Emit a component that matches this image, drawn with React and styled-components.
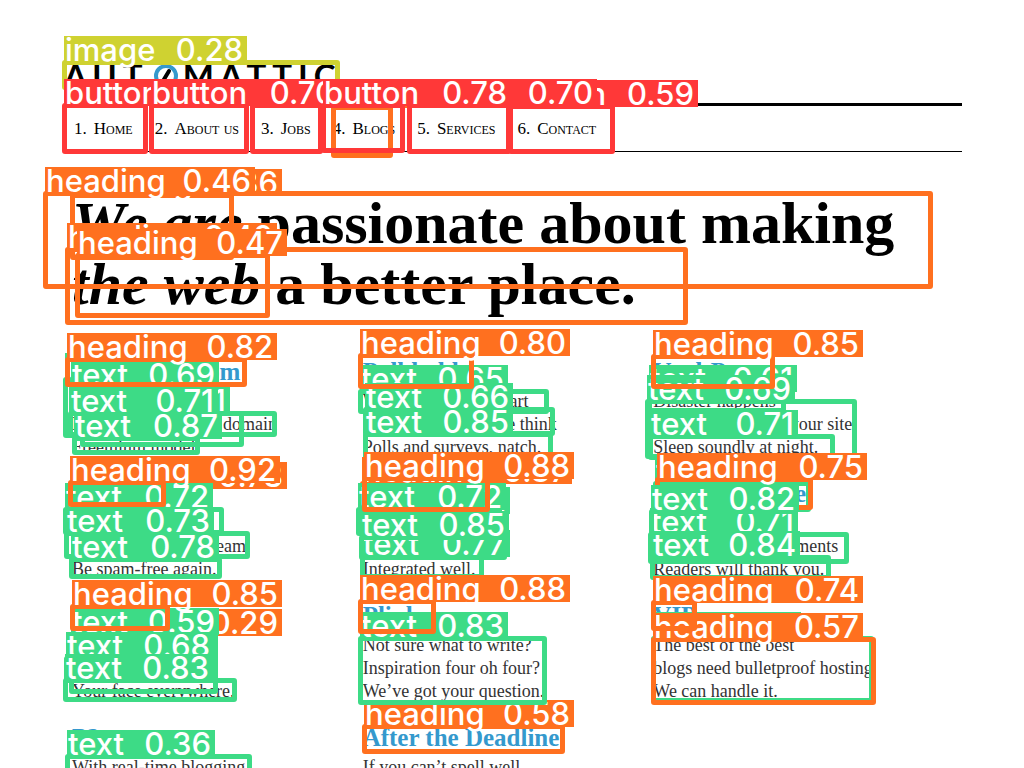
import React from 'react';
import styled, { createGlobalStyle } from 'styled-components';

const serif = '"Liberation Serif", "Times New Roman", serif';

const KINDS = {
  heading: { color: '#ff701f', width: 210 },
  text: { color: '#3ddb86', width: 148 },
  button: { color: '#ff3838', width: 188 },
  image: { color: '#cfd231', width: 183 },
};

const GlobalStyle = createGlobalStyle`
  * { box-sizing: border-box; }
  body { margin: 0; background: #fff; color: #333; font-family: ${serif}; }
`;

const Page = styled.div`
  position: relative;
  height: 100vh;
  overflow: hidden;
  padding: 60px 62px 0 64px;
`;

const Logo = styled.a`
  display: flex;
  align-items: center;
  gap: 5px;
  height: 43px;
  padding-bottom: 12px;
  color: #000;
  text-decoration: none;
  font: 700 33px/33px Lato, sans-serif;
  letter-spacing: 6px;
`;

const Nav = styled.nav`
  border-top: 3px solid #000;
  border-bottom: 1px solid #000;
`;

const NavList = styled.ol`
  display: flex;
  gap: 22px;
  margin: 0;
  padding: 0 10px;
  list-style: none;
`;

const NavLink = styled.a`
  display: flex;
  gap: 7px;
  color: #000;
  text-decoration: none;
  font-size: 17px;
  line-height: 45px;
  font-variant: small-caps;
  white-space: nowrap;
`;

const Tagline = styled.h1`
  margin: 41px 0 0;
  padding-left: 8px;
  color: #000;
  font-size: 60px;
  line-height: 61px;
  font-weight: 700;
`;

const Products = styled.div`
  display: grid;
  grid-template-columns: repeat(3, 1fr);
  row-gap: 22px;
  padding: 44px 18px 0 8px;
`;

const Product = styled.section`
  white-space: nowrap;
`;

const ProductName = styled.h2`
  margin: 0 0 5px;
  font-size: 25px;
  line-height: 26px;
  font-weight: 700;
`;

const ProductLink = styled.a`
  color: #3499cd;
  text-decoration: none;
`;

const Blurb = styled.p`
  margin: 0;
  font-size: 18px;
  line-height: 23px;
`;

const Overlay = styled.div`
  position: absolute;
  inset: 0;
  overflow: hidden;
  pointer-events: none;
`;

const Frame = styled.div.attrs(({ $x1, $y1, $x2, $y2 }) => ({
  style: { left: $x1 - 2, top: $y1 - 2, width: $x2 - $x1 + 4, height: $y2 - $y1 + 4 },
}))`
  position: absolute;
  border: 5px solid ${({ $kind }) => KINDS[$kind].color};
  border-radius: 3px;
`;

const Tag = styled.div.attrs(({ $x, $y }) => ({ style: { left: $x, top: $y - 26 } }))`
  position: absolute;
  display: flex;
  justify-content: space-between;
  width: ${({ $kind }) => KINDS[$kind].width}px;
  height: 27px;
  padding: 0 4px 0 1px;
  background: ${({ $kind }) => KINDS[$kind].color};
  color: #fff;
  font: 500 31px/28px Inter, sans-serif;
  white-space: nowrap;
`;

const NAV = ['Home', 'About us', 'Jobs', 'Blogs', 'Services', 'Contact'];

const PRODUCTS = [
  ['WordPress.com', 'Your blog, for free', 'Even with your own domain', 'Freemium model.'],
  ['Polldaddy', 'When you need a chart', 'Find out what people think', 'Polls and surveys, natch.'],
  ['VaultPress', 'Disaster happens', 'Secure backups of your site', 'Sleep soundly at night.'],
  ['Akismet', 'Spam is not fun', 'Let us filter your stream', 'Be spam-free again.'],
  ['VideoPress', 'Beautiful video', 'Hosted for you', 'Integrated well.'],
  ['IntenseDebate', 'Threads, replies', 'Enhances your comments', 'Readers will thank you.'],
  ['Gravatar', 'One picture', 'All your sites', 'Your face everywhere.'],
  ['Plinky', 'Not sure what to write?', 'Inspiration four oh four?', 'We’ve got your question.'],
  ['VIP', 'The best of the best', 'blogs need bulletproof hosting', 'We can handle it.'],
  ['P2', 'With real-time blogging'],
  ['After the Deadline', 'If you can’t spell well'],
];

// kind, score, left, top, right, bottom; later entries paint over earlier ones
const DETECTIONS = [
  ['image', '0.28', 64, 62, 338, 88],
  ['heading', '0.31', 333, 107, 391, 156],
  ['button', '0.59', 510, 106, 613, 152],
  ['button', '0.66', 252, 105, 321, 152],
  ['button', '0.68', 64, 105, 146, 152],
  ['button', '0.70', 409, 105, 509, 152],
  ['button', '0.70', 151, 105, 247, 152],
  ['button', '0.78', 323, 105, 403, 151],

  ['heading', '0.36', 72, 195, 232, 258],
  ['heading', '0.40', 67, 249, 686, 323],
  ['heading', '0.46', 45, 193, 931, 287],
  ['heading', '0.47', 77, 255, 268, 316],

  ['text', '0.41', 65, 379, 180, 436],
  ['text', '0.71', 82, 413, 242, 445],
  ['text', '0.69', 71, 387, 215, 413],
  ['text', '0.71', 70, 413, 275, 435],
  ['heading', '0.82', 67, 359, 245, 385],
  ['text', '0.87', 74, 438, 198, 453],

  ['text', '0.65', 360, 391, 547, 412],
  ['text', '0.66', 365, 409, 553, 434],
  ['heading', '0.80', 360, 355, 472, 387],
  ['text', '0.85', 365, 434, 551, 460],

  ['text', '0.61', 649, 391, 784, 411],
  ['text', '0.69', 647, 401, 855, 457],
  ['text', '0.71', 650, 436, 833, 458],
  ['heading', '0.85', 653, 356, 773, 387],

  ['heading', '0.73', 77, 488, 160, 503],
  ['text', '0.72', 65, 509, 222, 533],
  ['text', '0.73', 66, 533, 248, 557],
  ['text', '0.78', 71, 559, 220, 577],
  ['heading', '0.92', 70, 482, 164, 505],

  ['heading', '0.87', 362, 483, 484, 508],
  ['text', '0.72', 362, 513, 500, 534],
  ['text', '0.72', 358, 509, 500, 534],
  ['text', '0.77', 362, 556, 482, 577],
  ['text', '0.85', 361, 537, 505, 558],
  ['heading', '0.88', 364, 478, 488, 510],

  ['text', '0.70', 655, 483, 809, 510],
  ['text', '0.71', 650, 534, 847, 562],
  ['heading', '0.75', 657, 479, 811, 508],
  ['text', '0.82', 651, 511, 796, 534],
  ['text', '0.84', 652, 557, 829, 578],

  ['heading', '0.29', 72, 635, 180, 650],
  ['text', '0.59', 71, 634, 216, 692],
  ['text', '0.68', 66, 658, 212, 680],
  ['text', '0.83', 65, 680, 235, 700],
  ['heading', '0.85', 72, 606, 168, 629],

  ['heading', '0.58', 364, 726, 563, 752],
  ['text', '0.83', 360, 638, 545, 703],
  ['heading', '0.88', 360, 601, 434, 632],

  ['text', '0.57', 653, 638, 872, 701],
  ['heading', '0.57', 653, 639, 874, 703],
  ['heading', '0.74', 653, 602, 695, 629],

  ['text', '0.36', 67, 756, 250, 776],
];

function LogoRing() {
  return (
    <svg width="24" height="28" viewBox="0 0 24 28" aria-hidden="true">
      <circle cx="12" cy="14" r="10" fill="none" stroke="#3499cd" strokeWidth="4" />
      <path d="M15 9 L9 19" stroke="#000" strokeWidth="4" strokeLinecap="round" />
    </svg>
  );
}

function Detection({ item }) {
  const [kind, score, x1, y1, x2, y2] = item;
  return (
    <>
      <Frame $kind={kind} $x1={x1} $y1={y1} $x2={x2} $y2={y2} />
      <Tag $kind={kind} $x={x1} $y={y1}>
        <span>{kind}</span>
        <span>{score}</span>
      </Tag>
    </>
  );
}

export default function App() {
  return (
    <Page>
      <GlobalStyle />
      <header>
        <Logo href="#home" aria-label="Automattic">
          <span>AUT</span>
          <LogoRing />
          <span>MATTIC</span>
        </Logo>
        <Nav>
          <NavList>
            {NAV.map((name, i) => (
              <li key={name}>
                <NavLink href={`#${i + 1}`}>
                  <span>{i + 1}.</span>
                  <span>{name}</span>
                </NavLink>
              </li>
            ))}
          </NavList>
        </Nav>
      </header>
      <main>
        <Tagline>
          <em>We are</em> passionate about making
          <br />
          <em>the web</em> a better place.
        </Tagline>
        <Products>
          {PRODUCTS.map(([name, ...lines]) => (
            <Product key={name}>
              <ProductName>
                <ProductLink href="#product">{name}</ProductLink>
              </ProductName>
              {lines.map((line) => (
                <Blurb key={line}>{line}</Blurb>
              ))}
            </Product>
          ))}
        </Products>
      </main>
      <Overlay>
        {DETECTIONS.map((item, i) => (
          <Detection key={i} item={item} />
        ))}
      </Overlay>
    </Page>
  );
}
